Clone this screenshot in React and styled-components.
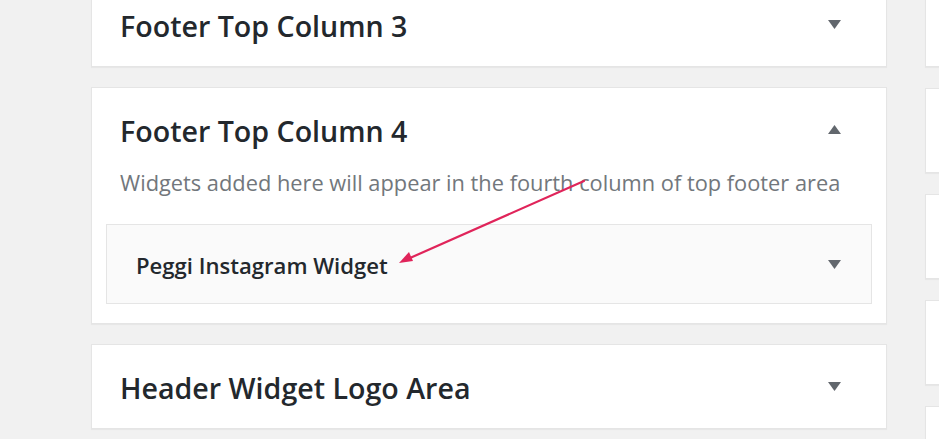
import React from "react";
import styled, { createGlobalStyle } from "styled-components";

const GlobalStyle = createGlobalStyle`
  html, body {
    margin: 0;
    padding: 0;
    background: #f1f1f1;
    overflow: hidden;
  }
  * { box-sizing: border-box; }
`;

const Viewport = styled.div`
  position: relative;
  width: 939px;
  height: 439px;
  overflow: hidden;
  background: #f1f1f1;
  font-family: "Open Sans", "Noto Sans", sans-serif;
`;

/* the widget screen is scrolled a little, so the first row is clipped */
const Columns = styled.div`
  display: flex;
  align-items: flex-start;
  gap: 38px;
  padding-left: 91px;
  margin-top: -18px;
`;

const Column = styled.div`
  display: flex;
  flex-direction: column;
  gap: ${(p) => p.$gap}px;
  width: ${(p) => p.$width}px;
  flex: none;
`;

const Panel = styled.section`
  background: #fff;
  border: 1px solid #e5e5e5;
  box-shadow: 0 1px 1px rgba(0, 0, 0, 0.04);
  height: ${(p) => (p.$height ? `${p.$height}px` : "auto")};
`;

const PanelHeader = styled.div`
  height: 83px;
  display: flex;
  align-items: center;
  justify-content: space-between;
  padding: 0 45px 0 28px;
`;

const PanelTitle = styled.h2`
  margin: 0;
  padding-top: 4px;
  font-size: 28.6px;
  font-weight: 600;
  color: #23282d;
  line-height: 1;
`;

const PanelBody = styled.div`
  padding: 0 14px 19px;
`;

const Description = styled.p`
  margin: 0;
  padding-left: 14px;
  font-size: 21.8px;
  line-height: 24px;
  color: #72777c;
  white-space: nowrap;
`;

const WidgetBox = styled.div`
  margin-top: 29px;
  height: 80px;
  background: #fafafa;
  border: 1px solid #e5e5e5;
  display: flex;
  align-items: center;
  justify-content: space-between;
  padding: 0 30px 0 29px;
`;

const WidgetTitle = styled.h3`
  margin: 0;
  padding-top: 2px;
  font-size: 22.1px;
  font-weight: 600;
  color: #23282d;
  line-height: 1;
`;

const CaretIcon = styled.svg`
  width: 13px;
  height: 9px;
  flex: none;
  display: block;
  fill: #62676d;
`;

const Annotation = styled.svg`
  position: absolute;
  left: 0;
  top: 0;
  width: 939px;
  height: 439px;
  pointer-events: none;
`;

function Caret({ up }) {
  return (
    <CaretIcon viewBox="0 0 13 9" aria-hidden="true">
      {up ? <path d="M6.5 0 L13 9 L0 9 Z" /> : <path d="M0 0 L13 0 L6.5 9 Z" />}
    </CaretIcon>
  );
}

function CollapsedPanel({ title }) {
  return (
    <Panel>
      <PanelHeader>
        <PanelTitle>{title}</PanelTitle>
        <Caret />
      </PanelHeader>
    </Panel>
  );
}

export default function App() {
  return (
    <Viewport>
      <GlobalStyle />
      <Columns>
        <Column $width={796} $gap={20}>
          <CollapsedPanel title="Footer Top Column 3" />
          <Panel>
            <PanelHeader>
              <PanelTitle>Footer Top Column 4</PanelTitle>
              <Caret up />
            </PanelHeader>
            <PanelBody>
              <Description>
                Widgets added here will appear in the fourth column of top footer area
              </Description>
              <WidgetBox>
                <WidgetTitle>Peggi Instagram Widget</WidgetTitle>
                <Caret />
              </WidgetBox>
            </PanelBody>
          </Panel>
          <CollapsedPanel title="Header Widget Logo Area" />
        </Column>
        <Column $width={300} $gap={21}>
          {[0, 1, 2, 3, 4].map((i) => (
            <Panel key={i} $height={85} />
          ))}
        </Column>
      </Columns>
      <Annotation viewBox="0 0 939 439">
        <line x1="584" y1="181" x2="410" y2="258" stroke="#e0245a" strokeWidth="2.2" strokeLinecap="round" />
        <path d="M399 263 L409 252 L413 261 Z" fill="#e0245a" />
      </Annotation>
    </Viewport>
  );
}
